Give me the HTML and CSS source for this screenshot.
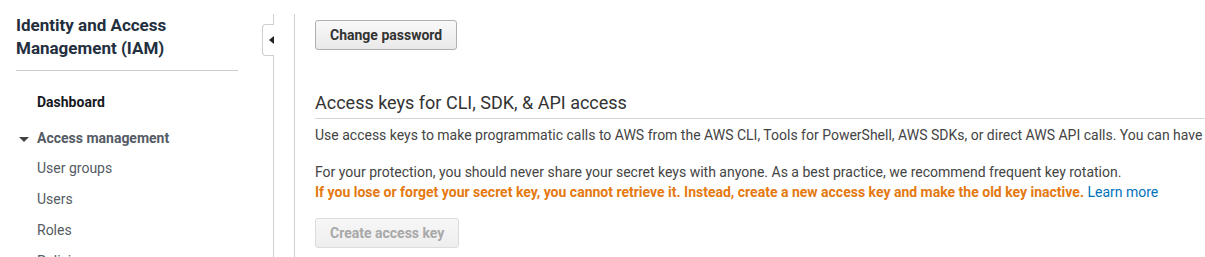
FILE: index.html
```html
<!DOCTYPE html>
<html lang="en">
<head>
<meta charset="utf-8">
<title>IAM</title>
<link rel="stylesheet" href="styles.css">
</head>
<body>
<div class="layout">
  <aside class="sidebar">
    <h1 class="side-title">Identity and Access Management (IAM)</h1>
    <hr class="side-rule">
    <nav class="nav">
      <div class="nav-item nav-top">Dashboard</div>
      <div class="nav-section"><span class="caret"></span>Access management</div>
      <div class="nav-item">User groups</div>
      <div class="nav-item">Users</div>
      <div class="nav-item">Roles</div>
      <div class="nav-item">Policies</div>
    </nav>
    <div class="toggle"><span class="toggle-arrow"></span></div>
  </aside>
  <main class="content">
    <button class="btn">Change password</button>
    <h2 class="section-title">Access keys for CLI, SDK, &amp; API access</h2>
    <p class="p1">Use access keys to make programmatic calls to AWS from the AWS CLI, Tools for PowerShell, AWS SDKs, or direct AWS API calls. You can have a maximum of two access keys (active or inactive) at a time.</p>
    <p class="p2">For your protection, you should never share your secret keys with anyone. As a best practice, we recommend frequent key rotation.<br><span class="warn">If you lose or forget your secret key, you cannot retrieve it. Instead, create a new access key and make the old key inactive.</span> <a class="link" href="#">Learn more</a></p>
    <button class="btn btn-disabled" disabled>Create access key</button>
  </main>
</div>
</body>
</html>
```

FILE: styles.css
```css
html, body {
  margin: 0;
  padding: 0;
  background: #fff;
  overflow: hidden;
  font-family: Roboto, "Liberation Sans", Arial, sans-serif;
}
.layout {
  display: flex;
  margin-top: 14px;
  height: 300px;
}
.sidebar {
  position: relative;
  width: 273px;
  flex: 0 0 273px;
  border-right: 1px solid #cfcfcf;
  box-sizing: content-box;
}
.side-title {
  margin: 0 0 0 16px;
  width: 230px;
  font-size: 17px;
  line-height: 23px;
  font-weight: 700;
  color: #232f3e;
}
.side-rule {
  margin: 10px 35px 0 16px;
  border: 0;
  border-top: 1px solid #cccccc;
  height: 0;
}
.nav {
  margin-top: 16px;
}
.nav-item, .nav-section {
  font-size: 14px;
  line-height: 31px;
  padding-left: 37px;
  color: #545b64;
}
.nav-top {
  font-weight: 700;
  color: #16191f;
}
.nav-section {
  position: relative;
  margin-top: 5px;
  margin-bottom: -1px;
  font-weight: 700;
  color: #545b64;
}
.caret {
  position: absolute;
  left: 19px;
  top: 14px;
  width: 0;
  height: 0;
  border-left: 5px solid transparent;
  border-right: 5px solid transparent;
  border-top: 5px solid #444;
}
.toggle {
  position: absolute;
  top: 10px;
  right: -1px;
  width: 11px;
  height: 30px;
  background: #fff;
  border: 1px solid #cfcfcf;
  border-right: 0;
  border-radius: 4px 0 0 4px;
}
.toggle-arrow {
  position: absolute;
  right: 0;
  top: 11px;
  width: 0;
  height: 0;
  border-top: 4.5px solid transparent;
  border-bottom: 4.5px solid transparent;
  border-right: 5px solid #222;
}
.content {
  margin-left: 20px;
  border-left: 1px solid #cfcfcf;
  padding: 6px 0 0 20px;
  flex: 1 0 auto;
  white-space: nowrap;
}
.btn {
  display: block;
  height: 30px;
  padding: 0 14px;
  font-family: Roboto, "Liberation Sans", Arial, sans-serif;
  font-size: 14px;
  font-weight: 700;
  color: #333;
  background: linear-gradient(#f9f9f9, #e9e9e9);
  border: 1px solid #b0b0b0;
  border-radius: 3px;
}
.btn-disabled {
  margin-top: 16px;
  color: #a8a8a8;
  background: linear-gradient(#f7f7f7, #eeeeee);
  border-color: #dcdcdc;
}
.section-title {
  margin: 41px 0 0 0;
  padding-bottom: 3px;
  font-size: 18px;
  line-height: 24px;
  font-weight: 400;
  color: #333;
  border-bottom: 1px solid #d5d5d5;
}
.p1 {
  margin: 6px 0 0 0;
  font-size: 14px;
  line-height: 20px;
  color: #444;
}
.p2 {
  margin: 17px 0 0 0;
  font-size: 14px;
  line-height: 20px;
  color: #444;
}
.warn {
  color: #e47911;
  font-weight: 700;
}
.link {
  color: #0073bb;
  text-decoration: none;
}
```
